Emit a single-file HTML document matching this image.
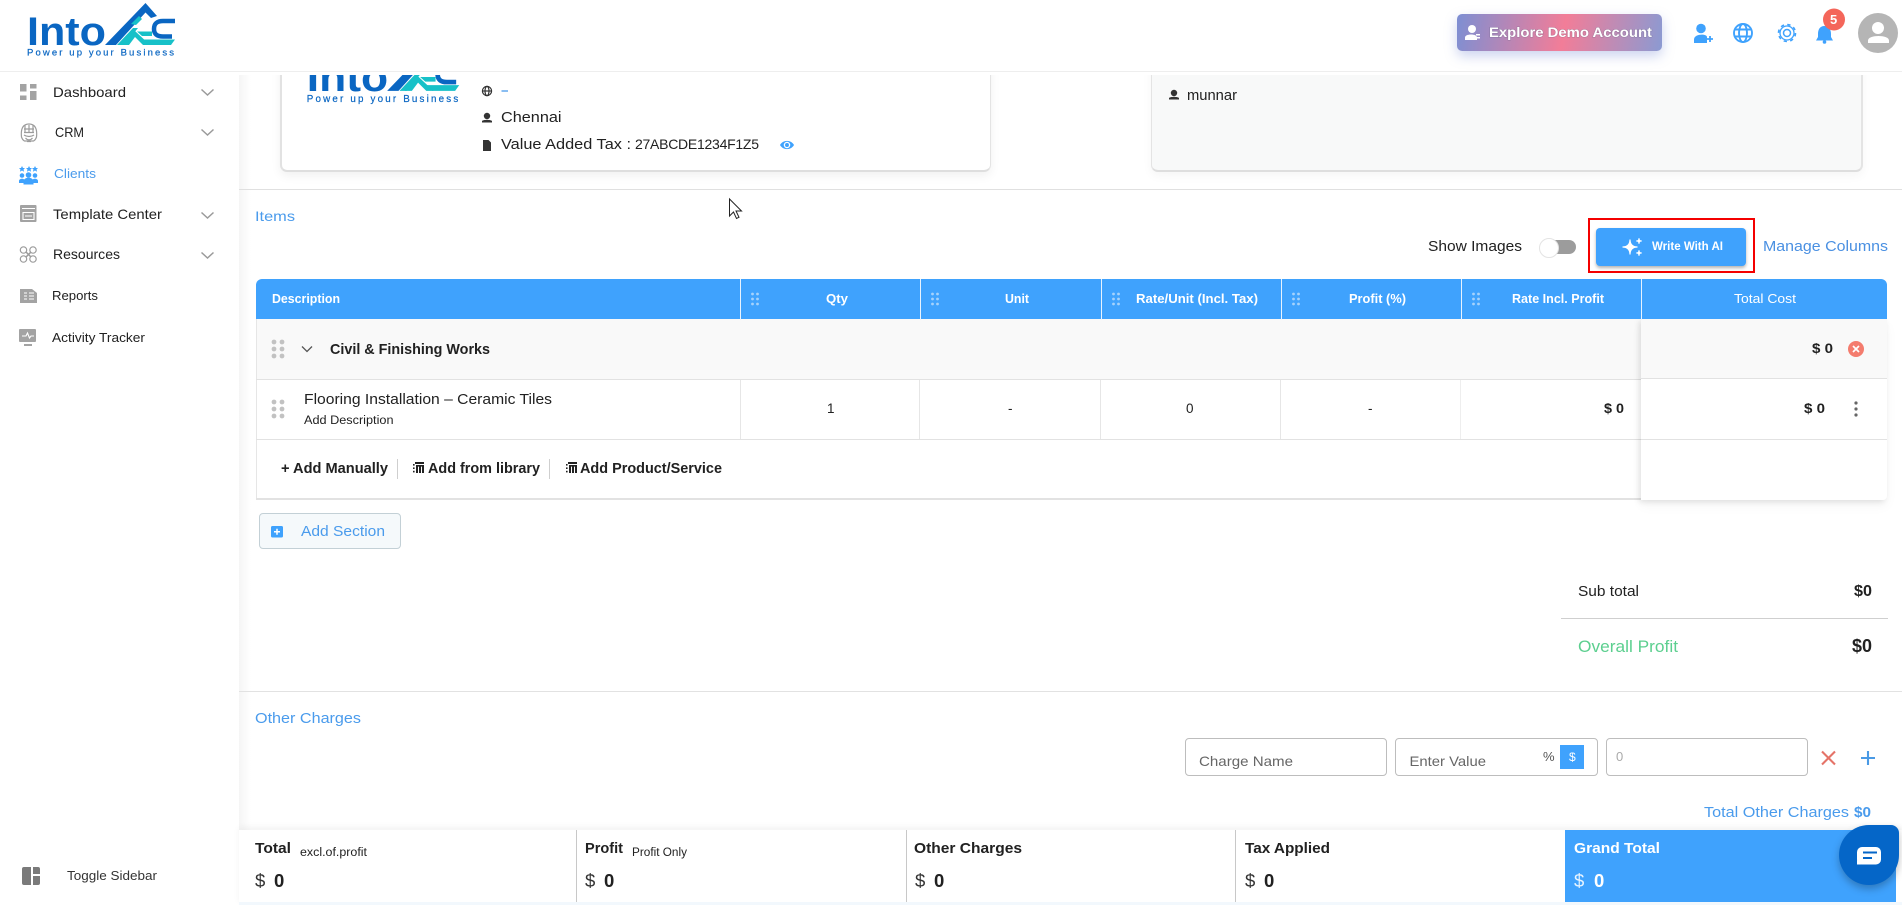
<!DOCTYPE html>
<html lang="en">
<head>
<meta charset="utf-8">
<title>IntoAEC Items</title>
<style>
html,body{margin:0;padding:0;background:#fff}
body{position:relative;width:1902px;height:905px;overflow:hidden;font-family:"Liberation Sans",sans-serif}
.b{position:absolute;box-sizing:border-box}
svg.o{position:absolute;left:0;top:0;z-index:20;filter:blur(.3px)}
text{font-family:"Liberation Sans",sans-serif;fill:#212121}
.w{font-weight:700}
.h{fill:#fff;font-weight:700;font-size:12.5px}
.lg{fill:#0a66c2;font-weight:700}
</style>
</head>
<body>
<div class="b" style="left:239px;top:71px;width:12px;height:834px;background:linear-gradient(90deg,#f5f5f5,#fff)"></div>
<div class="b" style="left:280px;top:-20px;width:711px;height:192px;background:#fff;border:1px solid #e4e4e4;border-left:2px solid #e2e2e2;border-bottom:2px solid #dedede;border-radius:7px;box-shadow:0 4px 10px rgba(0,0,0,.06)"></div>
<div class="b" style="left:1151px;top:-20px;width:712px;height:192px;background:#f8f9f9;border:1px solid #e4e4e4;border-bottom:2px solid #dedede;border-right:2px solid #e4e4e4;border-radius:7px;box-shadow:0 4px 10px rgba(0,0,0,.04)"></div>
<div class="b" style="left:0;top:0;width:1902px;height:75px;background:#fff"></div>
<div class="b" style="left:0;top:71px;width:1902px;height:1px;background:#eeeeee"></div>
<div class="b" style="left:239px;top:189px;width:1663px;height:1px;background:#e0e0e0"></div>

<!-- table -->
<div class="b" style="left:256px;top:319px;width:1px;height:180px;background:#e6e6e6"></div>
<div class="b" style="left:257px;top:319px;width:1384px;height:60px;background:#f9f9f9"></div>
<div class="b" style="left:256px;top:379px;width:1385px;height:1px;background:#e2e2e2"></div>
<div class="b" style="left:256px;top:439px;width:1385px;height:1px;background:#e2e2e2"></div>
<div class="b" style="left:256px;top:498px;width:1385px;height:2px;background:#e2e2e2"></div>
<div class="b" style="left:740px;top:380px;width:1px;height:59px;background:#e6e6e6"></div>
<div class="b" style="left:919px;top:380px;width:1px;height:59px;background:#e6e6e6"></div>
<div class="b" style="left:1100px;top:380px;width:1px;height:59px;background:#e6e6e6"></div>
<div class="b" style="left:1280px;top:380px;width:1px;height:59px;background:#e6e6e6"></div>
<div class="b" style="left:1460px;top:380px;width:1px;height:59px;background:#eeeeee"></div>
<div class="b" style="left:1641px;top:319px;width:246px;height:181px;background:#fff;box-shadow:-2px 2px 6px rgba(0,0,0,.1),0 6px 12px rgba(0,0,0,.04);border-radius:0 0 4px 0;z-index:2">
  <div class="b" style="left:0;top:0;width:246px;height:60px;background:#f9f9f9;border-bottom:1px solid #e2e2e2"></div>
  <div class="b" style="left:0;top:120px;width:246px;height:1px;background:#e2e2e2"></div>
</div>
<div class="b" style="left:256px;top:279px;width:1631px;height:40px;background:#3fa2fd;border-radius:6px 6px 0 0;z-index:3"></div>
<div class="b" style="left:740px;top:279px;width:1px;height:41px;background:#e8f3fe;z-index:4"></div>
<div class="b" style="left:920px;top:279px;width:1px;height:41px;background:#e8f3fe;z-index:4"></div>
<div class="b" style="left:1101px;top:279px;width:1px;height:41px;background:#e8f3fe;z-index:4"></div>
<div class="b" style="left:1281px;top:279px;width:1px;height:41px;background:#e8f3fe;z-index:4"></div>
<div class="b" style="left:1461px;top:279px;width:1px;height:41px;background:#e8f3fe;z-index:4"></div>
<div class="b" style="left:1641px;top:279px;width:1px;height:41px;background:#e8f3fe;z-index:4"></div>
<div class="b" style="left:397px;top:459px;width:1px;height:20px;background:#cfcfcf"></div>
<div class="b" style="left:549px;top:459px;width:1px;height:20px;background:#cfcfcf"></div>

<!-- buttons -->
<div class="b" style="left:1457px;top:14px;width:205px;height:37px;border-radius:5px;background:linear-gradient(100deg,#7d8fd3 0%,#f27d98 52%,#8b9ad2 100%);box-shadow:0 5px 12px rgba(110,130,210,.35)"></div>
<div class="b" style="left:1588px;top:218px;width:167px;height:55px;border:2px solid #f40000"></div>
<div class="b" style="left:1596px;top:228px;width:150px;height:38px;background:#3fa2fd;border-radius:4px;box-shadow:0 2px 3px rgba(0,0,0,.3)"></div>
<div class="b" style="left:259px;top:513px;width:142px;height:36px;background:#f5f9fb;border:1px solid #c3d0d6;border-radius:4px"></div>
<div class="b" style="left:1561px;top:618px;width:327px;height:1px;background:#cfcfcf"></div>
<div class="b" style="left:239px;top:691px;width:1663px;height:1px;background:#e2e2e2"></div>

<!-- inputs -->
<div class="b" style="left:1185px;top:738px;width:202px;height:38px;border:1px solid #bdbdbd;border-radius:4px"></div>
<div class="b" style="left:1395px;top:738px;width:203px;height:38px;border:1px solid #bdbdbd;border-radius:4px"></div>
<div class="b" style="left:1560px;top:745px;width:24px;height:24px;background:#3fa2fd"></div>
<div class="b" style="left:1606px;top:738px;width:202px;height:38px;border:1px solid #bdbdbd;border-radius:4px"></div>

<!-- bottom bar -->
<div class="b" style="left:239px;top:830px;width:1663px;height:75px;background:#f2f8fd;box-shadow:0 -3px 6px rgba(0,0,0,.05)"></div>
<div class="b" style="left:239px;top:830px;width:1663px;height:72px;background:#fff"></div>
<div class="b" style="left:576px;top:830px;width:1px;height:72px;background:#c8c8c8"></div>
<div class="b" style="left:906px;top:830px;width:1px;height:72px;background:#c8c8c8"></div>
<div class="b" style="left:1235px;top:830px;width:1px;height:72px;background:#c8c8c8"></div>
<div class="b" style="left:1565px;top:830px;width:331px;height:72px;background:#3fa2fd"></div>
<div class="b" style="left:1839px;top:825px;width:60px;height:60px;background:#0566c8;border-radius:30px 8px 30px 30px;box-shadow:0 4px 8px rgba(0,0,0,.25);z-index:10"></div>

<svg class="o" width="1902" height="905" viewBox="0 0 1902 905" xmlns="http://www.w3.org/2000/svg">
<defs>
<clipPath id="cc"><rect x="281" y="75" width="300" height="60"/></clipPath>
<g id="g1"><circle cx="-4" cy="-7" r="2.4"/><circle cx="4" cy="-7" r="2.4"/><circle cx="-4" cy="0" r="2.4"/><circle cx="4" cy="0" r="2.4"/><circle cx="-4" cy="7" r="2.4"/><circle cx="4" cy="7" r="2.4"/></g>
<g id="g2"><circle cx="-2.5" cy="-5" r="1.4"/><circle cx="2.5" cy="-5" r="1.4"/><circle cx="-2.5" cy="0" r="1.4"/><circle cx="2.5" cy="0" r="1.4"/><circle cx="-2.5" cy="5" r="1.4"/><circle cx="2.5" cy="5" r="1.4"/></g>
<g id="lib" fill="#222"><rect x="2" y="0" width="9" height="2"/><rect x="3" y="3" width="2" height="8"/><rect x="6" y="3" width="2" height="8"/><rect x="9" y="3" width="2" height="8"/><rect x="3" y="3" width="8" height="1.6"/><rect x="0" y="2" width="1.6" height="1.6"/><rect x="0" y="5.4" width="1.6" height="1.6"/><rect x="0" y="8.8" width="1.6" height="1.6"/></g>
<g id="logo">
  <text x="27" y="45" font-size="40" textLength="79" lengthAdjust="spacingAndGlyphs" class="lg">Into</text>
  <text x="27" y="55.6" font-size="9.5" textLength="147" style="fill:#0a66c2;stroke:#0a66c2;stroke-width:.2">Power up your Business</text>
  <path d="M105 45L145.5 3L157 16L151 18L145.5 12.500L116 45Z" fill="#0a66c2"/>
  <path d="M117 45L133 28L138 28L124 45Z" fill="#17c1c8"/>
  <path d="M122 45L135 31L150 45L143 45L135 37L129 45Z" fill="#17c1c8"/>
  <path d="M143 39.500H175L171 45H149Z" fill="#17c1c8"/>
  <path d="M137 31.500H152V36H142Z" fill="#17c1c8"/>
  <path d="M131 24L139 16L142 19L136 25Z" fill="#17c1c8"/>
  <path d="M175 21H163Q154 21 154 29Q154 36.500 163 36.500H172" fill="none" stroke="#0a66c2" stroke-width="4.500"/>
</g>
</defs>

<!-- header logo -->
<use href="#logo"/>

<!-- card logo -->
<g clip-path="url(#cc)"><use href="#logo" transform="translate(279,44.5) scale(1.03)"/></g>

<!-- sidebar icons -->
<g fill="#a3a3a3">
<rect x="20" y="84" width="6.5" height="7.5"/><rect x="20" y="95.5" width="6.5" height="4.5"/><rect x="30" y="84" width="6.5" height="4.5"/><rect x="30" y="91" width="6.5" height="9"/>
<rect x="20" y="205" width="16.5" height="17" rx="1"/>
<path d="M20 289h12l5 4v10h-17z"/>
<rect x="19" y="329" width="17" height="13" rx="1"/><rect x="24" y="344" width="8" height="2"/>
</g>
<g fill="none" stroke="#9c9c9c" stroke-width="1.2">
<path d="M21.500 137c-1-9 2-13 7.500-13s8.500 4 7.500 13c-1 3-3 4-3 4h-9s-2-1-3-4z"/>
<path d="M24 129h10M24 132.500h10M25 125.500v7M29 125v7M33 125.500v7M24 135c3 2 7 2 10 0M25.500 138c2 2.500 5 2.500 7 0M27 141.500h4"/>
<circle cx="23.500" cy="250" r="3.200"/><circle cx="33" cy="250" r="3.200"/><circle cx="23.500" cy="259" r="3.200"/><circle cx="33" cy="259" r="3.200"/><path d="M26 252l5 5M31 252l-5 5" stroke-width="1.500"/>
</g>
<g fill="none" stroke="#fff" stroke-width="1.100">
<path d="M22 208.500h13M23 212.500h11v7h-11zM25 216h7"/>
<path d="M24 293h3M24 296h3M24 299h3M29 293h5M29 296h5M29 299h5"/>
<path d="M22 336h4l1.500-3 2 5 1.500-2h3"/>
</g>
<g fill="#3fa2fd">
<path d="M22 166l1 2h2l-1.500 1.500.6 2.200-2.100-1.200-2.100 1.200.6-2.200-1.500-1.500h2z"/>
<path d="M29 166l1 2h2l-1.500 1.500.6 2.200-2.100-1.200-2.100 1.200.6-2.200-1.500-1.500h2z"/>
<path d="M35 166l1 2h2l-1.500 1.500.6 2.200-2.100-1.200-2.100 1.200.6-2.200-1.500-1.500h2z"/>
<circle cx="22" cy="175.500" r="2.300"/><circle cx="35" cy="175.500" r="2.300"/><circle cx="28.500" cy="175" r="2.800"/>
<path d="M19 183v-2c0-3 6-3 6 0v2zM32 183v-2c0-3 6-3 6 0v2zM23.500 184.500v-3c0-5 10-5 10 0v3z"/>
</g>
<path d="M201.500 89.500l6 5.500 6-5.500M201.500 129.500l6 5.500 6-5.500M201.500 212.500l6 5.500 6-5.500M201.500 252.500l6 5.500 6-5.500" fill="none" stroke="#9a9a9a" stroke-width="1.500"/>
<path d="M24 867h7v18h-7a2 2 0 0 1-2-2v-14a2 2 0 0 1 2-2zM33 867h5a2 2 0 0 1 2 2v5h-7zM33 876h7v7a2 2 0 0 1-2 2h-5z" fill="#7a7a7a"/>

<!-- sidebar text -->
<text x="53" y="97" font-size="14" textLength="73" lengthAdjust="spacingAndGlyphs">Dashboard</text>
<text x="55" y="137" font-size="14" textLength="29" lengthAdjust="spacingAndGlyphs">CRM</text>
<text x="54" y="178" font-size="13" textLength="42" lengthAdjust="spacingAndGlyphs" style="fill:#4a9bec">Clients</text>
<text x="53" y="219" font-size="14" textLength="109" lengthAdjust="spacingAndGlyphs">Template Center</text>
<text x="53" y="259" font-size="14" textLength="67" lengthAdjust="spacingAndGlyphs">Resources</text>
<text x="52" y="300" font-size="12.500" textLength="46" lengthAdjust="spacingAndGlyphs">Reports</text>
<text x="52" y="342" font-size="12.500" textLength="93" lengthAdjust="spacingAndGlyphs">Activity Tracker</text>
<text x="67" y="880" font-size="12.500" textLength="90" lengthAdjust="spacingAndGlyphs" style="fill:#333">Toggle Sidebar</text>

<!-- top right -->
<g fill="#fff">
<circle cx="1472" cy="29" r="4"/><path d="M1465 40v-2.500c0-4 12-4 12 0v2.500z"/><path d="M1476 34h4v1.500h-4zM1476 37h4v1.500h-4z"/>
</g>
<text x="1489" y="37" font-size="14" textLength="163" lengthAdjust="spacingAndGlyphs" class="w" style="fill:#fff;paint-order:stroke;stroke:rgba(90,90,120,.35);stroke-width:1px">Explore Demo Account</text>
<g fill="#3fa2fd">
<circle cx="1701" cy="28.500" r="4.800"/><path d="M1694 43v-3.500c0-6 13-6 13-2.500v6z"/>
</g>
<path d="M1707 39h6M1710 36v6" stroke="#3fa2fd" stroke-width="1.800" fill="none"/>
<g fill="none" stroke="#3fa2fd" stroke-width="1.900">
<circle cx="1743" cy="33" r="9"/><ellipse cx="1743" cy="33" rx="4" ry="9"/><path d="M1735 29.500h16M1735 36.500h16"/>
</g>
<g fill="none" stroke="#3fa2fd">
<circle cx="1787" cy="33" r="3.500" stroke-width="1.500"/><circle cx="1787" cy="33" r="7" stroke-width="1.300"/><circle cx="1787" cy="33" r="8.500" stroke-width="1.600" stroke-dasharray="3.340 3.335"/>
</g>
<path d="M1824.500 26c-5 0-6.500 4-6.500 8v3l-2 3.500h17l-2-3.500v-3c0-4-1.500-8-6.500-8z" fill="#3fa2fd"/><circle cx="1824.500" cy="42" r="1.800" fill="#3fa2fd"/>
<circle cx="1834" cy="19.500" r="11" fill="#f4665a"/>
<text x="1830" y="24" font-size="13" class="w" style="fill:#fff">5</text>
<circle cx="1878" cy="33" r="20" fill="#b5b5b5"/>
<circle cx="1878" cy="28" r="6" fill="#fff"/><path d="M1868 43v-2.500c0-6 21-6 21 0v2.500z" fill="#fff"/>

<!-- card text -->
<g fill="none" stroke="#333" stroke-width="1.200"><circle cx="487" cy="91" r="4.600"/><ellipse cx="487" cy="91" rx="2" ry="4.600"/><path d="M482.500 91h9"/></g>
<path d="M501.500 91h6.500" stroke="#4a9bec" stroke-width="1.300"/>
<g fill="#333">
<circle cx="487" cy="116" r="3.200"/><path d="M482 121c1-1.500 9-1.500 10 0v1.500h-10z"/>
<path d="M483 140h5.500l2.500 2.500v8.500h-8z"/>
<circle cx="1174" cy="93" r="3.200"/><path d="M1169 98c1-1.500 9-1.500 10 0v1.500h-10z"/>
</g>
<text x="501" y="122" font-size="15" textLength="60.500" lengthAdjust="spacingAndGlyphs">Chennai</text>
<text x="501" y="149" font-size="15" textLength="130" lengthAdjust="spacingAndGlyphs">Value Added Tax :</text>
<text x="635" y="149" font-size="14" textLength="124" lengthAdjust="spacing">27ABCDE1234F1Z5</text>
<path d="M780 145c3-5.500 11-5.500 14 0c-3 5.500-11 5.500-14 0z" fill="#3fa2fd"/><circle cx="787" cy="145" r="2.600" fill="none" stroke="#fff" stroke-width="1.300"/>
<text x="1187" y="100" font-size="15" textLength="50" lengthAdjust="spacingAndGlyphs">munnar</text>

<!-- items toolbar -->
<text x="255" y="221" font-size="14" textLength="40" lengthAdjust="spacingAndGlyphs" style="fill:#4a9bec">Items</text>
<text x="1428" y="251" font-size="15" textLength="94" lengthAdjust="spacingAndGlyphs">Show Images</text>
<rect x="1545" y="240" width="31" height="14" rx="7" fill="#9c9c9c"/>
<circle cx="1549" cy="248" r="9.500" fill="#fff" stroke="#e3e3e3" stroke-width="1"/>
<path d="M1630 239.500Q1630 247 1637.500 247Q1630 247 1630 254.500Q1630 247 1622.500 247Q1630 247 1630 239.500Z" fill="#fff" stroke="#fff" stroke-width="1.200"/>
<path d="M1639 238Q1639 241 1642 241Q1639 241 1639 244Q1639 241 1636 241Q1639 241 1639 238Z" fill="#fff" stroke="#fff" stroke-width=".8"/>
<path d="M1639 250Q1639 253 1642 253Q1639 253 1639 256Q1639 253 1636 253Q1639 253 1639 250Z" fill="#fff" stroke="#fff" stroke-width=".8"/>
<text x="1652" y="250" font-size="12" textLength="71" lengthAdjust="spacingAndGlyphs" class="w" style="fill:#fff">Write With AI</text>
<text x="1763" y="251" font-size="15" textLength="125" lengthAdjust="spacingAndGlyphs" style="fill:#4a90e2">Manage Columns</text>

<!-- cursor -->
<path d="M729.500 199v17l4-4 3 6.500 2.500-1.200-3-6.300h5.500z" fill="#fff" stroke="#222" stroke-width="1"/>

<!-- table header -->
<text x="272" y="303" font-size="12.500" textLength="68" lengthAdjust="spacingAndGlyphs" class="h">Description</text>
<text x="826" y="303" font-size="12.500" textLength="22" lengthAdjust="spacingAndGlyphs" class="h">Qty</text>
<text x="1005" y="303" font-size="12.500" textLength="24" lengthAdjust="spacingAndGlyphs" class="h">Unit</text>
<text x="1136" y="303" font-size="12.500" textLength="122" lengthAdjust="spacingAndGlyphs" class="h">Rate/Unit (Incl. Tax)</text>
<text x="1349" y="303" font-size="12.500" textLength="57" lengthAdjust="spacingAndGlyphs" class="h">Profit (%)</text>
<text x="1512" y="303" font-size="12.500" textLength="92" lengthAdjust="spacingAndGlyphs" class="h">Rate Incl. Profit</text>
<text x="1734" y="303" font-size="12.500" textLength="62" lengthAdjust="spacingAndGlyphs" style="fill:#fff">Total Cost</text>
<g fill="#a5d2fb"><use href="#g2" x="755" y="299"/><use href="#g2" x="935" y="299"/><use href="#g2" x="1116" y="299"/><use href="#g2" x="1296" y="299"/><use href="#g2" x="1476" y="299"/></g>

<!-- rows -->
<g fill="#c2c2c2"><use href="#g1" x="278" y="349"/><use href="#g1" x="278" y="409"/></g>
<path d="M302 346.500l5 5 5-5" fill="none" stroke="#555" stroke-width="1.300"/>
<text x="330" y="354" font-size="15" textLength="160" lengthAdjust="spacingAndGlyphs" class="w">Civil &amp; Finishing Works</text>
<text x="304" y="404" font-size="15" textLength="248" lengthAdjust="spacingAndGlyphs">Flooring Installation – Ceramic Tiles</text>
<text x="304" y="424" font-size="11.500" textLength="89.500" lengthAdjust="spacingAndGlyphs">Add Description</text>
<text x="827" y="413" font-size="13.500">1</text>
<text x="1008" y="413" font-size="13.500">-</text>
<text x="1186" y="413" font-size="13.500">0</text>
<text x="1368" y="413" font-size="13.500">-</text>
<text x="1604" y="413" font-size="14" textLength="20" lengthAdjust="spacingAndGlyphs" class="w">$ 0</text>
<text x="1812" y="353" font-size="14" textLength="21" lengthAdjust="spacingAndGlyphs" class="w">$ 0</text>
<text x="1804" y="413" font-size="14" textLength="21" lengthAdjust="spacingAndGlyphs" class="w">$ 0</text>
<circle cx="1856" cy="349" r="8" fill="#f47c6e"/><path d="M1853 346l6 6M1859 346l-6 6" stroke="#fff" stroke-width="1.700"/>
<g fill="#666"><circle cx="1856" cy="403" r="1.600"/><circle cx="1856" cy="409" r="1.600"/><circle cx="1856" cy="415" r="1.600"/></g>

<!-- add row -->
<text x="281" y="473" font-size="15" textLength="107" lengthAdjust="spacingAndGlyphs" class="w">+ Add Manually</text>
<use href="#lib" x="413" y="462"/>
<text x="428" y="473" font-size="15" textLength="112" lengthAdjust="spacingAndGlyphs" class="w">Add from library</text>
<use href="#lib" x="566" y="462"/>
<text x="580" y="473" font-size="15" textLength="142" lengthAdjust="spacingAndGlyphs" class="w">Add Product/Service</text>

<rect x="271" y="526" width="12" height="11.500" rx="1.500" fill="#3fa2fd"/><path d="M274 531.800h6M277 528.800v6" stroke="#fff" stroke-width="1.500"/>
<text x="301" y="536" font-size="15" textLength="84" lengthAdjust="spacingAndGlyphs" style="fill:#4a9bec">Add Section</text>

<!-- totals -->
<text x="1578" y="596" font-size="15" textLength="61" lengthAdjust="spacingAndGlyphs">Sub total</text>
<text x="1854" y="596" font-size="16" textLength="18" lengthAdjust="spacingAndGlyphs" class="w">$0</text>
<text x="1578" y="652" font-size="16.500" textLength="100" lengthAdjust="spacingAndGlyphs" style="fill:#5ccf8f">Overall Profit</text>
<text x="1852" y="652" font-size="18" textLength="20" lengthAdjust="spacingAndGlyphs" class="w">$0</text>

<!-- other charges -->
<text x="255" y="723" font-size="15" textLength="106" lengthAdjust="spacingAndGlyphs" style="fill:#4a9bec">Other Charges</text>
<text x="1199" y="766" font-size="14" textLength="94" lengthAdjust="spacingAndGlyphs" style="fill:#666">Charge Name</text>
<text x="1409.500" y="766" font-size="14" textLength="76.500" lengthAdjust="spacingAndGlyphs" style="fill:#666">Enter Value</text>
<text x="1543" y="761" font-size="13" style="fill:#555">%</text>
<text x="1569" y="761" font-size="12" style="fill:#fff">$</text>
<text x="1616" y="761" font-size="13" style="fill:#aaa">0</text>
<path d="M1822 751.500l13 13M1835 751.500l-13 13" stroke="#e57368" stroke-width="2.100"/>
<path d="M1868 751v14M1861 758h14" stroke="#4a9ae5" stroke-width="2.100"/>
<text x="1704" y="817" font-size="14.500" textLength="145" lengthAdjust="spacingAndGlyphs" style="fill:#4a9bec">Total Other Charges</text>
<text x="1854" y="817" font-size="14.500" textLength="17" lengthAdjust="spacingAndGlyphs" class="w" style="fill:#4a9bec">$0</text>

<!-- bottom bar -->
<text x="255" y="853" font-size="15" textLength="36" lengthAdjust="spacingAndGlyphs" class="w">Total</text>
<text x="300" y="856" font-size="11.500" textLength="67" lengthAdjust="spacingAndGlyphs">excl.of.profit</text>
<text x="255" y="887" font-size="18.500" style="fill:#333">$</text>
<text x="274" y="887" font-size="18.500" class="w">0</text>
<text x="585" y="853" font-size="15" textLength="38" lengthAdjust="spacingAndGlyphs" class="w">Profit</text>
<text x="632" y="856" font-size="11.500" textLength="55" lengthAdjust="spacingAndGlyphs">Profit Only</text>
<text x="585" y="887" font-size="18.500" style="fill:#333">$</text>
<text x="604" y="887" font-size="18.500" class="w">0</text>
<text x="914" y="853" font-size="15" textLength="108" lengthAdjust="spacingAndGlyphs" class="w">Other Charges</text>
<text x="915" y="887" font-size="18.500" style="fill:#333">$</text>
<text x="934" y="887" font-size="18.500" class="w">0</text>
<text x="1245" y="853" font-size="15" textLength="85" lengthAdjust="spacingAndGlyphs" class="w">Tax Applied</text>
<text x="1245" y="887" font-size="18.500" style="fill:#333">$</text>
<text x="1264" y="887" font-size="18.500" class="w">0</text>
<text x="1574" y="853" font-size="15" textLength="86" lengthAdjust="spacingAndGlyphs" class="w" style="fill:#fff">Grand Total</text>
<text x="1574" y="887" font-size="18.500" style="fill:#e8f4ff">$</text>
<text x="1594" y="887" font-size="18.500" class="w" style="fill:#fff">0</text>

<!-- chat icon -->
<rect x="1857" y="847" width="24" height="17.500" rx="5" fill="#fff"/>
<path d="M1857 860v4.500h5z" fill="#fff"/>
<path d="M1863 852.500h14M1863 858h9" stroke="#0566c8" stroke-width="2"/>
</svg>
</body>
</html>
